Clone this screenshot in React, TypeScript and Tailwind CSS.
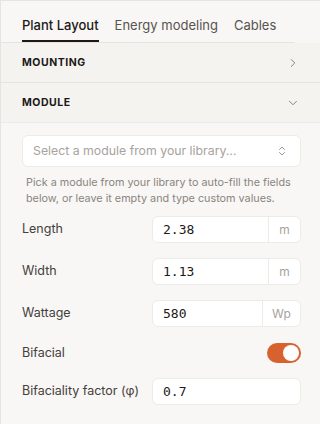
import { ChevronRight, ChevronDown, ChevronsUpDown } from "lucide-react";

const fields = [
  { label: "Length", value: "2.38", unit: "m" },
  { label: "Width", value: "1.13", unit: "m" },
  { label: "Wattage", value: "580", unit: "Wp" },
];

export default function App() {
  return (
    <div className="w-[320px] h-[424px] overflow-hidden border-t border-l border-[#e6e4e0] bg-[#f8f7f5] text-[#1c1917] font-['Inter',sans-serif]">
      {/* Tabs */}
      <div className="flex h-[42px] w-[294px] items-end gap-[16px] whitespace-nowrap border-b border-[#e6e4e0] px-[21px] text-[13px]">
        <div className="border-b-2 border-[#1c1917] pb-[6px] font-medium leading-[18px]">Plant Layout</div>
        <div className="pb-[8px] leading-[18px] text-[#57534e]">Energy modeling</div>
        <div className="pb-[8px] leading-[18px] text-[#57534e]">Cables</div>
      </div>

      {/* Accordion headers */}
      <div className="flex h-[40px] items-center justify-between border-b border-[#e6e4e0] bg-[#f4f3f0] pl-[21px] pr-[20px]">
        <span className="text-[10.5px] font-bold tracking-[0.05em]">MOUNTING</span>
        <ChevronRight className="h-[14px] w-[14px] text-[#78716c]" strokeWidth={1.5} />
      </div>
      <div className="flex h-[40px] items-center justify-between border-b border-[#ecebe7] bg-[#f4f3f0] pl-[21px] pr-[20px]">
        <span className="text-[10.5px] font-bold tracking-[0.05em]">MODULE</span>
        <ChevronDown className="h-[14px] w-[14px] text-[#78716c]" strokeWidth={1.5} />
      </div>

      {/* Module content */}
      <div className="pl-[21px] pr-[19px] pt-[12px]">
        <div className="flex h-[32px] items-center justify-between rounded-[6px] border border-[#ecebe7] bg-white pl-[10px] pr-[12px]">
          <span className="text-[12.3px] text-[#a8a29e]">Select a module from your library...</span>
          <ChevronsUpDown className="h-[12px] w-[12px] text-[#78716c]" strokeWidth={1.5} />
        </div>
        <p className="mt-[8px] pl-[4px] text-[10.8px] leading-[16px] text-[#8a847e]">
          Pick a module from your library to auto-fill the fields below, or leave it empty and type custom values.
        </p>

        <div className="mt-[9px] flex flex-col gap-[15px]">
          {fields.map((f) => (
            <div key={f.label} className="flex items-center justify-between">
              <span className="text-[12.5px] text-[#44403c]">{f.label}</span>
              <div className="flex h-[27px] w-[149px] rounded-[6px] border border-[#ecebe7] bg-white">
                <span className="flex-1 pl-[10px] font-['DejaVu_Sans_Mono',monospace] text-[13px] leading-[26px]">{f.value}</span>
                <span className={`flex items-center justify-center border-l border-[#ecebe7] text-[12px] text-[#a8a29e] ${f.unit === "Wp" ? "w-[38px]" : "w-[32px]"}`}>
                  {f.unit}
                </span>
              </div>
            </div>
          ))}

          <div className="mt-[1px] flex items-center justify-between">
            <span className="text-[12.5px] text-[#44403c]">Bifacial</span>
            <div className="flex h-[20px] w-[34px] items-center justify-end rounded-full bg-[#d8622f] pr-[2px]">
              <div className="h-[16px] w-[16px] rounded-full bg-white" />
            </div>
          </div>

          <div className="flex items-center justify-between">
            <span className="text-[12.5px] text-[#44403c]">Bifaciality factor (φ)</span>
            <div className="flex h-[27px] w-[149px] items-center rounded-[6px] border border-[#ecebe7] bg-white pl-[10px]">
              <span className="font-['DejaVu_Sans_Mono',monospace] text-[13px]">0.7</span>
            </div>
          </div>
        </div>
      </div>
    </div>
  );
}
